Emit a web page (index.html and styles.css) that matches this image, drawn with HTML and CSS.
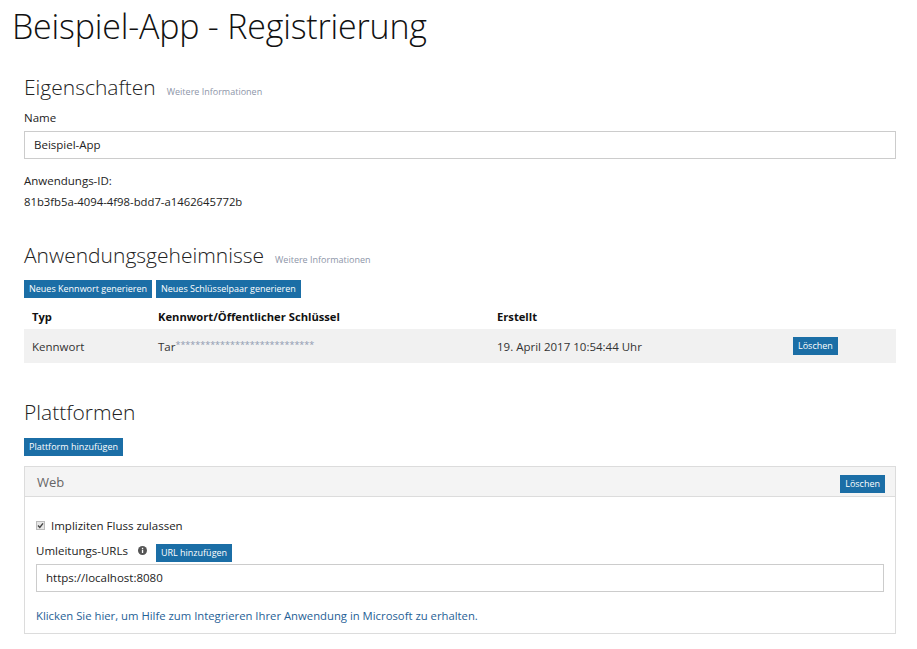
FILE: index.html
```html
<!DOCTYPE html>
<html lang="de">
<head>
<meta charset="utf-8">
<title>Beispiel-App - Registrierung</title>
<link rel="stylesheet" href="styles.css">
</head>
<body>
<h1 class="page-title">Beispiel-App - Registrierung</h1>
<main class="content">
  <section class="section">
    <div class="section-head">
      <h2 class="section-title">Eigenschaften</h2>
      <a class="more-info" href="#">Weitere Informationen</a>
    </div>
    <div class="field-label">Name</div>
    <div class="text-input">Beispiel-App</div>
    <div class="field-label id-label">Anwendungs-ID:</div>
    <div class="id-value">81b3fb5a-4094-4f98-bdd7-a1462645772b</div>
  </section>

  <section class="section secrets">
    <div class="section-head">
      <h2 class="section-title">Anwendungsgeheimnisse</h2>
      <a class="more-info" href="#">Weitere Informationen</a>
    </div>
    <div class="btn-row">
      <button class="btn">Neues Kennwort generieren</button>
      <button class="btn">Neues Schlüsselpaar generieren</button>
    </div>
    <div class="table">
      <div class="trow thead">
        <div class="c-type">Typ</div>
        <div class="c-key">Kennwort/Öffentlicher Schlüssel</div>
        <div class="c-date">Erstellt</div>
        <div class="c-act"></div>
      </div>
      <div class="trow tbody">
        <div class="c-type">Kennwort</div>
        <div class="c-key">Tar<span class="stars">****************************</span></div>
        <div class="c-date">19. April 2017 10:54:44 Uhr</div>
        <div class="c-act"><button class="btn">Löschen</button></div>
      </div>
    </div>
  </section>

  <section class="section platforms">
    <div class="section-head">
      <h2 class="section-title">Plattformen</h2>
    </div>
    <div class="btn-row">
      <button class="btn">Plattform hinzufügen</button>
    </div>
    <div class="panel">
      <div class="panel-head">
        <span class="panel-title">Web</span>
        <button class="btn">Löschen</button>
      </div>
      <div class="panel-body">
        <label class="check-row">
          <span class="checkbox">
            <svg width="9" height="9" viewBox="0 0 9 9"><path d="M2 4.6 L3.8 6.4 L7 2.4" fill="none" stroke="#444" stroke-width="1.4"/></svg>
          </span>
          <span>Impliziten Fluss zulassen</span>
        </label>
        <div class="url-head">
          <span>Umleitungs-URLs</span>
          <svg class="info" width="9" height="9" viewBox="0 0 9 9"><circle cx="4.5" cy="4.5" r="4.5" fill="#555"/><rect x="3.9" y="3.7" width="1.3" height="3.3" fill="#fff"/><rect x="3.9" y="1.8" width="1.3" height="1.2" fill="#fff"/></svg>
          <button class="btn">URL hinzufügen</button>
        </div>
        <div class="text-input url-input">https://localhost:8080</div>
        <a class="help-link" href="#">Klicken Sie hier, um Hilfe zum Integrieren Ihrer Anwendung in Microsoft zu erhalten.</a>
      </div>
    </div>
  </section>
</main>
</body>
</html>
```
FILE: styles.css
```css
* { box-sizing: border-box; }
body {
  margin: 0;
  padding: 0 21px 0 12px;
  font-family: "Open Sans", "Noto Sans", sans-serif;
  color: #222;
  background: #fff;
  font-size: 11.5px;
}
.page-title {
  margin: 0;
  padding-top: 2px;
  font-weight: 300;
  font-size: 34px;
  line-height: 48px;
  color: #111;
  letter-spacing: -0.2px;
}
.content { padding-left: 12px; }
.section { margin-top: 22px; }
.section.secrets { margin-top: 30px; }
.section.platforms { margin-top: 34px; }
.section-head {
  display: flex;
  align-items: baseline;
  gap: 11px;
  height: 30px;
}
.section-title {
  margin: 0;
  font-weight: 300;
  font-size: 21px;
  line-height: 30px;
  color: #222;
}
.more-info {
  font-size: 9px;
  color: #8d95a8;
  text-decoration: none;
}
.field-label { margin-top: 8px; line-height: 16px; color: #222; font-size: 11.5px; }
.text-input {
  margin-top: 5px;
  height: 28px;
  border: 1px solid #ccc;
  padding: 0 9px;
  line-height: 26px;
  font-size: 11.5px;
  color: #222;
}
.id-label { margin-top: 14px; }
.id-value { margin-top: 5px; line-height: 16px; font-size: 11.3px; }
.btn-row { display: flex; gap: 4px; margin-top: 10px; }
.btn {
  background: #1b6ea6;
  color: #fff;
  border: 0;
  border-radius: 0;
  font-family: inherit;
  font-size: 9px;
  height: 18px;
  padding: 0 5px;
  line-height: 18px;
  cursor: pointer;
}
.table { margin-top: 6px; }
.trow {
  display: grid;
  grid-template-columns: 126px 339px 296px 1fr;
  align-items: center;
  padding-left: 8px;
}
.thead { height: 25px; font-weight: 700; font-size: 11.2px; color: #111; }
.tbody { height: 34px; background: #f1f1f1; color: #333; font-size: 11.5px; }
.stars { color: #8e9ab0; font-size: 9px; vertical-align: 3px; }
.platforms .btn-row { margin-top: 11px; }
.panel {
  margin-top: 10px;
  border: 1px solid #dcdcdc;
}
.panel-head {
  height: 30px;
  background: #f4f4f4;
  border-bottom: 1px solid #dcdcdc;
  display: flex;
  align-items: center;
  justify-content: space-between;
  padding: 0 10px 0 12px;
}
.panel-title { font-size: 13px; color: #666; }
.panel-head .btn { margin-top: 5px; }
.panel-body { padding: 21px 11px 9px 11px; }
.check-row { display: flex; align-items: center; gap: 6px; font-size: 11.5px; color: #222; }
.checkbox {
  width: 9px; height: 9px;
  background: #e6e6e6;
  border: 1px solid #bbb;
  display: flex; align-items: center; justify-content: center;
}
.checkbox svg { display: block; flex: none; }
.url-head {
  margin-top: 6px;
  display: flex;
  align-items: center;
  font-size: 11.5px;
}
.url-head .info { margin-left: 10px; margin-right: 9px; }
.url-head .btn { margin-top: 5px; }
.url-input { margin-top: 2px; }
.help-link {
  display: block;
  margin-top: 16px;
  color: #1f6196;
  text-decoration: none;
  font-size: 11.3px;
  line-height: 16px;
}
```
